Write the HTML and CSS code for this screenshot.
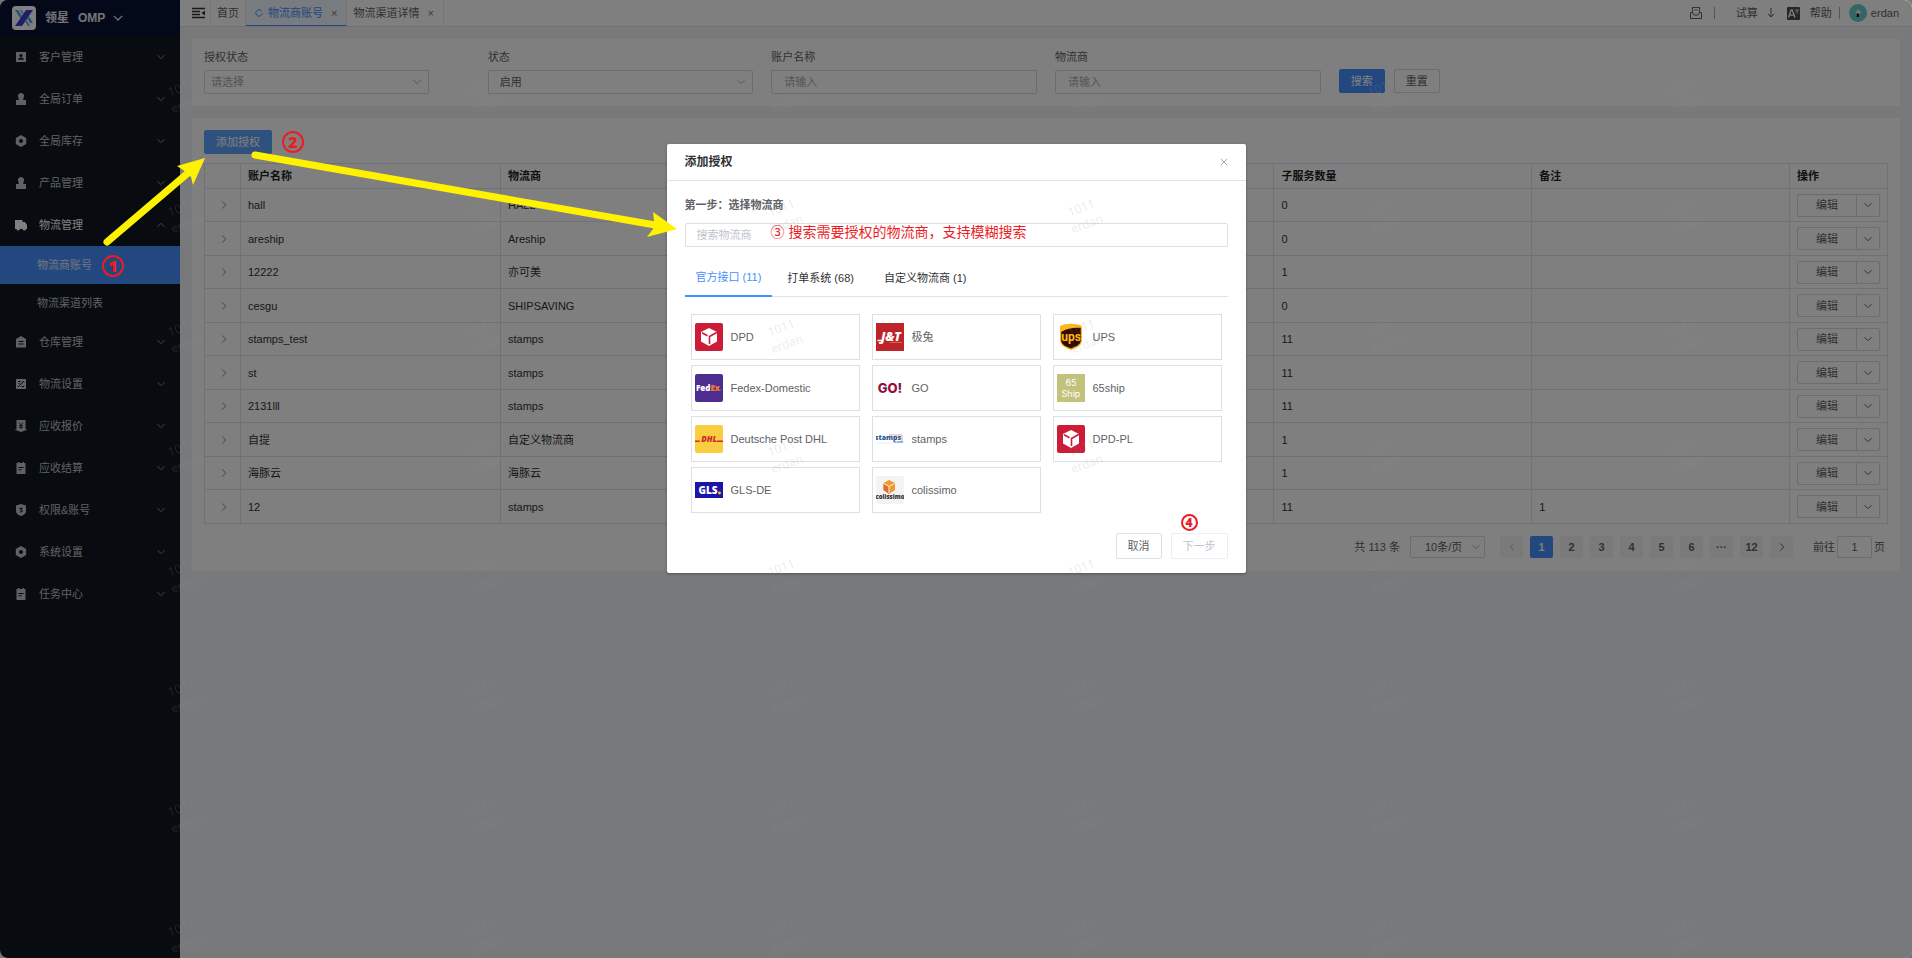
FILE: index.html
```
<!DOCTYPE html>
<html lang="zh-CN">

<head>
    <meta charset="UTF-8">
    <meta name="viewport" content="width=device-width, initial-scale=1.0">
    <title>领星 OMP - 物流商账号</title>
    <link rel="stylesheet" href="styles.css">
</head>

<body>
    <!-- Shared icons -->
    <svg class="sprite" aria-hidden="true">
        <symbol id="down" viewBox="0 0 10 10"><path d="M1.5 3.2 5 6.7 8.5 3.2" fill="none" stroke="currentColor"/></symbol>
        <symbol id="right" viewBox="0 0 10 10"><path d="M3.3 1.5 6.8 5 3.3 8.5" fill="none" stroke="currentColor"/></symbol>
        <symbol id="user" viewBox="0 0 12 12"><path d="M1 1h10v10H1z" fill="currentColor"/><circle cx="6" cy="4.5" r="1.6" fill="#0f171f"/><path d="M3.2 8.8c0-3 5.6-3 5.6 0z" fill="#0f171f"/></symbol>
        <symbol id="stamp" viewBox="0 0 12 12"><path d="M6 0a3 3 0 0 1 2.6 4.600L8.200 7H11v3H1V7h2.800L3.400 4.600A3 3 0 0 1 6 0zM1 10h10v2H1z" fill="currentColor"/></symbol>
        <symbol id="hex" viewBox="0 0 12 12"><path d="M6 0l5.200 3v6L6 12 .8 9V3zM6 4a2 2 0 1 0 0 4 2 2 0 0 0 0-4z" fill="currentColor" fill-rule="evenodd"/></symbol>
        <symbol id="truck" viewBox="0 0 12 12"><path d="M0 1h7.500v2H10l2 3v4h-1a1.600 1.600 0 0 1-3.200 0H4.700a1.600 1.600 0 0 1-3.200 0H0z" fill="currentColor"/></symbol>
        <symbol id="house" viewBox="0 0 12 12"><path d="M6 0l5 3v8.500H1V3zM3.500 5v1h5V5zm0 2.500v1h5v-1z" fill="currentColor" fill-rule="evenodd"/></symbol>
        <symbol id="percent" viewBox="0 0 12 12"><path d="M1 1h10v10H1z" fill="currentColor"/><path d="M3 9l6-6M3 3.500h2.500M6.500 8.500H9M3.500 5.500h1" stroke="#0f171f"/></symbol>
        <symbol id="price" viewBox="0 0 12 12"><path d="M1.500 0h9v9h1v1L6 12 .5 10V9h1z" fill="currentColor"/><path d="M4 2.500l2 2.500 2-2.500M6 5v4M4 5.500h4M4 7.300h4" stroke="#0f171f" fill="none" stroke-width=".8"/></symbol>
        <symbol id="note" viewBox="0 0 12 12"><path d="M1.500 1H3V0h1.500v1h3V0H9v1h1.500v11h-9z" fill="currentColor"/><path d="M3.500 5.500h5M3.500 7.800h3" stroke="#0f171f"/></symbol>
        <symbol id="shield" viewBox="0 0 12 12"><path d="M6 0l5 1.500V7c0 3-3 4.300-5 5-2-.7-5-2-5-5V1.500z" fill="currentColor"/><path d="M6 3.500v5M4.500 4.500h3M6 7h2" stroke="#0f171f"/></symbol>
        <symbol id="dpd" viewBox="0 0 28 28"><rect width="28" height="28" rx="2" fill="#cd1c37"/><path d="M14 5l8 4v9.500L14 23l-8-4.500V9z" fill="#fff"/><path d="M7 9.800l5.500 3M22 9.300l-7.500 4.200V21" fill="none" stroke="#cd1c37" stroke-width="1.600"/></symbol>
    </svg>

    <div class="app">
        <aside class="sidebar">
            <div class="brand">
                <svg class="brand-logo" viewBox="0 0 24 24">
                    <rect width="24" height="24" rx="4" fill="#fff"/>
                    <path d="M14 4h7L10 20H3z" fill="#3a3fd0"/>
                    <path d="M3 4h3l4 6-1.500 2.500zM8 4h1.500l2 3-1 1.500zM15 12l1.500-2.500L21 17h-3zM13 15l1-1.500 4 6.500h-2z" fill="#5b9fe0"/>
                </svg>
                <strong>领星</strong>
                <strong class="brand-code">OMP</strong>
                <svg class="brand-arrow"><use href="#down"/></svg>
            </div>
            <nav class="menu">
                <a class="menu-item" href="#"><svg class="menu-icon"><use href="#user"/></svg>客户管理<svg class="chevron"><use href="#down"/></svg></a>
                <a class="menu-item" href="#"><svg class="menu-icon"><use href="#stamp"/></svg>全局订单<svg class="chevron"><use href="#down"/></svg></a>
                <a class="menu-item" href="#"><svg class="menu-icon"><use href="#hex"/></svg>全局库存<svg class="chevron"><use href="#down"/></svg></a>
                <a class="menu-item" href="#"><svg class="menu-icon"><use href="#stamp"/></svg>产品管理<svg class="chevron"><use href="#down"/></svg></a>
                <a class="menu-item open" href="#"><svg class="menu-icon"><use href="#truck"/></svg>物流管理<svg class="chevron"><use href="#down"/></svg></a>
                <a class="sub-item active" href="#">物流商账号</a>
                <a class="sub-item" href="#">物流渠道列表</a>
                <a class="menu-item" href="#"><svg class="menu-icon"><use href="#house"/></svg>仓库管理<svg class="chevron"><use href="#down"/></svg></a>
                <a class="menu-item" href="#"><svg class="menu-icon"><use href="#percent"/></svg>物流设置<svg class="chevron"><use href="#down"/></svg></a>
                <a class="menu-item" href="#"><svg class="menu-icon"><use href="#price"/></svg>应收报价<svg class="chevron"><use href="#down"/></svg></a>
                <a class="menu-item" href="#"><svg class="menu-icon"><use href="#note"/></svg>应收结算<svg class="chevron"><use href="#down"/></svg></a>
                <a class="menu-item" href="#"><svg class="menu-icon"><use href="#shield"/></svg>权限&amp;账号<svg class="chevron"><use href="#down"/></svg></a>
                <a class="menu-item" href="#"><svg class="menu-icon"><use href="#hex"/></svg>系统设置<svg class="chevron"><use href="#down"/></svg></a>
                <a class="menu-item" href="#"><svg class="menu-icon"><use href="#note"/></svg>任务中心<svg class="chevron"><use href="#down"/></svg></a>
            </nav>
        </aside>

        <div class="main">
            <header class="topbar">
                <button class="fold" aria-label="收起菜单">
                    <svg viewBox="0 0 13 12"><path d="M0 1.500h13M0 4.500h8M0 7.500h8M0 10.500h13" stroke="#303133" stroke-width="1.400"/><path d="M13 3.500v5L9.500 6z" fill="#303133"/></svg>
                </button>
                <a class="page-tab" href="#">首页</a>
                <a class="page-tab current" href="#">
                    <svg class="reload" viewBox="0 0 8 8"><path d="M6.600 2A3.200 3.200 0 1 0 7.200 4.600" fill="none" stroke="currentColor"/></svg>
                    物流商账号<span class="tab-close">×</span>
                </a>
                <a class="page-tab" href="#">物流渠道详情<span class="tab-close">×</span></a>

                <div class="tools">
                    <svg class="inbox" viewBox="0 0 12 12"><path d="M2.500 6V.5h7V6M4.500 3h3M.5 5.500h2L4 8h4l1.500-2.500h2v6H.5z" fill="none" stroke="#606266"/></svg>
                    <span class="line"></span>
                    <a class="trial" href="#">试算</a>
                    <svg class="arrow-down" viewBox="0 0 8 10"><path d="M4 0v9M.8 5.800 4 9l3.200-3.200" fill="none" stroke="#606266"/></svg>
                    <svg class="lang" viewBox="0 0 13 13"><rect width="13" height="13" rx="1" fill="#4a4d55"/><path d="M1.500 10.500 4.200 3h1L8 10.500M2.500 8.200H7" fill="none" stroke="#fff" stroke-width="1.300"/><path d="M8 3h4M10 2v1M8.500 6.500l3-3.500M8.500 3l3 3.500" fill="none" stroke="#fff" stroke-width=".6"/></svg>
                    <a class="help" href="#">帮助</a>
                    <span class="line"></span>
                    <svg class="avatar" viewBox="0 0 18 18"><circle cx="9" cy="9" r="9" fill="#66cfc8"/><path d="M7 8l2-3 1.500 2L13 8.500 10 10v2H7z" fill="#e8eef0"/><path d="M7.500 9.500H10V13H7.500z" fill="#222"/></svg>
                    <span>erdan</span>
                </div>
            </header>

            <form class="panel filters">
                <div class="field">
                    <label for="authState">授权状态</label>
                    <div class="select-box short">
                        <select id="authState" class="placeholder"><option>请选择</option></select>
                        <svg class="chevron"><use href="#down"/></svg>
                    </div>
                </div>
                <div class="field">
                    <label for="state">状态</label>
                    <div class="select-box">
                        <select id="state"><option>启用</option></select>
                        <svg class="chevron"><use href="#down"/></svg>
                    </div>
                </div>
                <div class="field">
                    <label for="accountName">账户名称</label>
                    <input id="accountName" type="text" placeholder="请输入">
                </div>
                <div class="field">
                    <label for="provider">物流商</label>
                    <input id="provider" type="text" placeholder="请输入">
                </div>
                <div class="filter-btns">
                    <button type="button" class="btn primary">搜索</button>
                    <button type="button" class="btn">重置</button>
                </div>
            </form>

            <section class="panel list">
                <button class="btn primary light add">添加授权</button>
                <table class="accounts">
                    <colgroup>
                        <col class="col-expand">
                        <col class="col-account">
                        <col>
                        <col>
                        <col>
                        <col>
                        <col>
                        <col class="col-action">
                    </colgroup>
                    <thead>
                        <tr><th></th><th>账户名称</th><th>物流商</th><th></th><th></th><th>子服务数量</th><th>备注</th><th>操作</th></tr>
                    </thead>
                    <tbody>
                        <tr><td><svg class="expand"><use href="#right"/></svg></td><td>hall</td><td>HALL</td><td></td><td></td><td>0</td><td></td><td><div class="split"><button>编辑</button><button aria-label="更多"><svg><use href="#down"/></svg></button></div></td></tr>
                        <tr><td><svg class="expand"><use href="#right"/></svg></td><td>areship</td><td>Areship</td><td></td><td></td><td>0</td><td></td><td><div class="split"><button>编辑</button><button aria-label="更多"><svg><use href="#down"/></svg></button></div></td></tr>
                        <tr><td><svg class="expand"><use href="#right"/></svg></td><td>12222</td><td>亦可美</td><td></td><td></td><td>1</td><td></td><td><div class="split"><button>编辑</button><button aria-label="更多"><svg><use href="#down"/></svg></button></div></td></tr>
                        <tr><td><svg class="expand"><use href="#right"/></svg></td><td>cesgu</td><td>SHIPSAVING</td><td></td><td></td><td>0</td><td></td><td><div class="split"><button>编辑</button><button aria-label="更多"><svg><use href="#down"/></svg></button></div></td></tr>
                        <tr><td><svg class="expand"><use href="#right"/></svg></td><td>stamps_test</td><td>stamps</td><td></td><td></td><td>11</td><td></td><td><div class="split"><button>编辑</button><button aria-label="更多"><svg><use href="#down"/></svg></button></div></td></tr>
                        <tr><td><svg class="expand"><use href="#right"/></svg></td><td>st</td><td>stamps</td><td></td><td></td><td>11</td><td></td><td><div class="split"><button>编辑</button><button aria-label="更多"><svg><use href="#down"/></svg></button></div></td></tr>
                        <tr><td><svg class="expand"><use href="#right"/></svg></td><td>2131lll</td><td>stamps</td><td></td><td></td><td>11</td><td></td><td><div class="split"><button>编辑</button><button aria-label="更多"><svg><use href="#down"/></svg></button></div></td></tr>
                        <tr><td><svg class="expand"><use href="#right"/></svg></td><td>自提</td><td>自定义物流商</td><td></td><td></td><td>1</td><td></td><td><div class="split"><button>编辑</button><button aria-label="更多"><svg><use href="#down"/></svg></button></div></td></tr>
                        <tr><td><svg class="expand"><use href="#right"/></svg></td><td>海豚云</td><td>海豚云</td><td></td><td></td><td>1</td><td></td><td><div class="split"><button>编辑</button><button aria-label="更多"><svg><use href="#down"/></svg></button></div></td></tr>
                        <tr><td><svg class="expand"><use href="#right"/></svg></td><td>12</td><td>stamps</td><td></td><td></td><td>11</td><td>1</td><td><div class="split"><button>编辑</button><button aria-label="更多"><svg><use href="#down"/></svg></button></div></td></tr>
                    </tbody>
                </table>

                <div class="pagination">
                    <span>共 113 条</span>
                    <div class="select-box page-size">
                        <select aria-label="每页条数"><option>10条/页</option></select>
                        <svg class="chevron"><use href="#down"/></svg>
                    </div>
                    <div class="pager">
                        <button class="prev" aria-label="上一页"><svg><use href="#right"/></svg></button>
                        <button class="on">1</button>
                        <button>2</button>
                        <button>3</button>
                        <button>4</button>
                        <button>5</button>
                        <button>6</button>
                        <button>···</button>
                        <button>12</button>
                        <button aria-label="下一页"><svg><use href="#right"/></svg></button>
                    </div>
                    <div class="jump">
                        <label for="jumpPage">前往</label>
                        <input id="jumpPage" type="text" value="1">
                        <span>页</span>
                    </div>
                </div>
            </section>
        </div>

        <!-- Add authorization dialog -->
        <div class="mask">
            <div class="dialog" role="dialog" aria-labelledby="dialogTitle">
                <div class="dialog-head">
                    <strong id="dialogTitle">添加授权</strong>
                    <button class="close" aria-label="关闭"><svg viewBox="0 0 10 10"><path d="M1 1l8 8M9 1L1 9" stroke="#909399"/></svg></button>
                </div>
                <div class="dialog-body">
                    <label class="step" for="searchProvider">第一步：选择物流商</label>
                    <div class="search-box">
                        <input id="searchProvider" type="text" placeholder="搜索物流商">
                        <span class="tip">③ 搜索需要授权的物流商，支持模糊搜索</span>
                    </div>
                    <div class="tabs">
                        <button class="tab selected">官方接口 (11)</button>
                        <button class="tab">打单系统 (68)</button>
                        <button class="tab">自定义物流商 (1)</button>
                    </div>
                    <div class="providers">
                        <button class="card"><svg class="logo"><use href="#dpd"/></svg>DPD</button>
                        <button class="card">
                            <svg class="logo" viewBox="0 0 28 28"><rect width="28" height="28" fill="#bd2429"/><text x="15" y="18" class="logo-jt">J&amp;T</text><path d="M1.500 17.500h5" stroke="#fff" stroke-width="1.500"/><path d="M14 19.500h12" stroke="#e9a3a5" stroke-width=".5"/></svg>极兔
                        </button>
                        <button class="card">
                            <svg class="logo" viewBox="0 0 28 28"><path d="M3 3c6-3 16-3 22 0v14c0 6-6 8-11 10C9 25 3 23 3 17z" fill="#fdb71a"/><path d="M4.200 9c6-4 13-4.500 19.600-4V17c0 5-5 6.500-9.800 8.500C9.200 23.500 4.200 22 4.200 17z" fill="#330a05"/><text x="14" y="18" class="logo-ups">ups</text></svg>UPS
                        </button>
                        <button class="card">
                            <svg class="logo" viewBox="0 0 28 28"><rect width="28" height="28" rx="2" fill="#4d2d90"/><text x="1" y="17" class="logo-fedex">Fed<tspan fill="#f47b2a">Ex</tspan></text><circle cx="25.500" cy="16" r=".5" fill="#f47b2a"/></svg>Fedex-Domestic
                        </button>
                        <button class="card">
                            <svg class="logo" viewBox="0 0 28 28"><text x="14" y="19" class="logo-go">GO!</text></svg>GO
                        </button>
                        <button class="card">
                            <svg class="logo" viewBox="0 0 28 28"><rect width="28" height="28" fill="#c2c27d"/><text x="14" y="12" class="logo-65">65</text><text x="14" y="23" class="logo-65">Ship</text></svg>65ship
                        </button>
                        <button class="card">
                            <svg class="logo" viewBox="0 0 28 28"><rect width="28" height="28" rx="2" fill="#f8cd3f"/><text x="14" y="17" class="logo-dhl">DHL</text><path d="M0 15.500h5l-.6 1.500H0zM22 15.500h6V17h-6.600z" fill="#d22630"/></svg>Deutsche Post DHL
                        </button>
                        <button class="card">
                            <svg class="logo" viewBox="0 0 28 28"><path d="M13 10h13v7" fill="none" stroke="#f0a0a8"/><text x="12" y="15" class="logo-stamps">stamps</text><text x="22" y="18" class="logo-com">.com</text><path d="M1 18h16" stroke="#e4e8ef" stroke-width=".8"/></svg>stamps
                        </button>
                        <button class="card"><svg class="logo"><use href="#dpd"/></svg>DPD-PL</button>
                        <button class="card">
                            <svg class="logo" viewBox="0 0 28 28"><rect y="6" width="28" height="16" fill="#1e13a8"/><text x="13" y="18" class="logo-gls">GLS</text><circle cx="24.500" cy="17" r="1.400" fill="#ffd100"/></svg>GLS-DE
                        </button>
                        <button class="card">
                            <svg class="logo" viewBox="0 0 28 28"><rect width="28" height="28" rx="2" fill="#f3f3f3"/><path d="M13 4l6 3v7l-6 4-5.500-4V7z" fill="#ef9a2f"/><path d="M7.500 8l5.500 3v7l-5.500-4z" fill="#e5692c"/><path d="M8 7.500l5 3 5.500-3M13 10.500V17" fill="none" stroke="#f3f3f3"/><text x="14" y="23" class="logo-coli">colissimo</text></svg>colissimo
                        </button>
                    </div>
                </div>
                <div class="dialog-foot">
                    <button class="btn">取消</button>
                    <div class="next">
                        <span class="mark mark-small">4</span>
                        <button class="btn" disabled>下一步</button>
                    </div>
                </div>
            </div>
        </div>

        <!-- Watermark -->
        <svg class="watermark" aria-hidden="true">
            <defs>
                <pattern id="wm" width="300" height="120" patternUnits="userSpaceOnUse">
                    <g transform="rotate(-20 181 87)">
                        <text x="181" y="92">1011</text>
                        <text x="181" y="109">erdan</text>
                    </g>
                </pattern>
            </defs>
            <rect width="100%" height="100%" fill="url(#wm)"/>
        </svg>

        <!-- Guide marks and arrows -->
        <span class="mark mark-one">1</span>
        <span class="mark mark-two">2</span>
        <svg class="guide" aria-hidden="true">
            <path d="M107 242 188 173M255 155 655 225" stroke="#fff200" stroke-width="7" stroke-linecap="round"/>
            <path d="M205 158l-28 8 9 6 5 5 2 8zM677 229l-24-17 1 9-1 8-6 8z" fill="#fff200"/>
        </svg>
    </div>
</body>

</html>
```
FILE: styles.css
```
* {
    box-sizing: border-box;
}

html {
    background-color: #77757f;
}

body {
    margin: 0;
    font-family: "Liberation Sans", "Noto Sans CJK SC", sans-serif;
    font-size: 11px;
    line-height: 16px;
    color: #606266;
}

a {
    color: inherit;
    text-decoration: none;
}

button,
input,
select {
    margin: 0;
    padding: 0;
    font: inherit;
    color: inherit;
    background: none;
    border: none;
    appearance: none;
    outline: none;
}

.sprite {
    display: none;
}

svg {
    flex-shrink: 0;
}

.app {
    position: relative;
    display: flex;
    min-height: 100vh;
    overflow: hidden;
    border-radius: 8px;
    background-color: #eff2f7;
}

/* Sidebar */
.sidebar {
    flex: 0 0 180px;
    background-color: #10171f;
    color: #bfc2c6;
}

.brand {
    display: flex;
    align-items: center;
    height: 36px;
    padding-left: 12px;
    background-color: #081335;
    color: #e6e8ee;
    font-size: 12px;
}

.brand-logo {
    width: 24px;
    height: 24px;
    margin-right: 9px;
}

.brand-code {
    margin-left: 9px;
}

.brand-arrow {
    width: 12px;
    height: 12px;
    margin-left: 7px;
}

.menu-item {
    display: flex;
    align-items: center;
    height: 42px;
    padding: 0 14px 0 15px;
}

.menu-icon {
    width: 12px;
    height: 12px;
    margin-right: 12px;
}

.chevron {
    width: 10px;
    height: 10px;
    color: #a8abb2;
}

.menu-item .chevron {
    margin-left: auto;
    color: #85898f;
}

.menu-item.open {
    color: #fff;
}

.menu-item.open .chevron {
    transform: rotate(180deg);
}

.sub-item {
    display: flex;
    align-items: center;
    height: 37px;
    padding-left: 37px;
}

.sub-item.active {
    height: 38px;
    background-color: #468ffe;
    color: #e4ecf8;
}

/* Top bar */
.main {
    flex: 1;
    min-width: 0;
}

.topbar {
    display: flex;
    align-items: stretch;
    height: 27px;
    background-color: #fff;
    border-bottom: 1px solid #e1e4ea;
}

.fold {
    display: flex;
    align-items: center;
    width: 31px;
    padding-left: 12px;
    border-right: 1px solid #ebedf0;
}

.fold svg {
    width: 13px;
    height: 12px;
}

.page-tab {
    display: flex;
    align-items: center;
    padding: 0 6px;
    border-right: 1px solid #ebedf0;
}

.page-tab.current {
    padding-left: 9px;
    color: #468ffe;
    background-color: #f0f6ff;
    border-bottom: 1px solid #468ffe;
}

.reload {
    width: 8px;
    height: 8px;
    margin-right: 5px;
}

.tab-close {
    margin: 0 3px 0 8px;
    color: #707378;
}

.tools {
    display: flex;
    align-items: center;
    margin-left: auto;
    padding-right: 13px;
}

.inbox {
    width: 12px;
    height: 12px;
    margin-right: 12px;
}

.line {
    width: 1px;
    height: 12px;
    background-color: #a8abb2;
}

.trial {
    margin-left: 21px;
}

.arrow-down {
    width: 8px;
    height: 10px;
    margin: 0 12px 0 9px;
}

.lang {
    width: 13px;
    height: 13px;
    margin-right: 10px;
}

.help {
    margin-right: 7px;
}

.avatar {
    width: 18px;
    height: 18px;
    margin: 0 4px 0 9px;
}

/* Panels */
.panel {
    margin: 12px 12px 0;
    padding: 12px;
    background-color: #fff;
}

.filters {
    display: grid;
    grid-template-columns: repeat(6, 1fr);
    gap: 18px;
    height: 67px;
    padding-top: 10px;
}

.field label {
    display: block;
    margin-bottom: 5px;
}

.field input,
.select-box {
    width: 100%;
    height: 24px;
    border: 1px solid #d5d8de;
    border-radius: 2px;
}

.field input {
    padding: 0 12px;
}

input::placeholder,
.placeholder {
    color: #a8abb2;
    opacity: 1;
}

.select-box {
    display: flex;
    align-items: center;
    padding-right: 6px;
}

.select-box.short {
    width: 225px;
}

.select-box select {
    flex: 1;
    height: 100%;
    padding-left: 11px;
}

.select-box.short select {
    padding-left: 6px;
}

.filter-btns {
    display: flex;
    gap: 9px;
    padding-top: 20px;
}

.btn {
    height: 24px;
    padding: 0 11px;
    border: 1px solid #d5d8de;
    border-radius: 2px;
    background-color: #fff;
}

.btn.primary {
    border-color: #468ffe;
    background-color: #468ffe;
    color: #fff;
}

.btn.light {
    border-color: #5fa3fb;
    background-color: #5fa3fb;
}

/* Account list */
.add {
    display: block;
    margin-bottom: 9px;
}

.accounts {
    width: 100%;
    table-layout: fixed;
    border-collapse: collapse;
    color: #303133;
}

.col-expand {
    width: 36px;
}

.col-account {
    width: 260px;
}

.col-action {
    width: 98px;
}

.accounts th,
.accounts td {
    height: 33px;
    padding: 0 7px;
    border: 1px solid #dde3ec;
    text-align: left;
}

.accounts th {
    height: 25px;
    color: #222;
}

.accounts tr:nth-child(even) td {
    height: 34px;
}

.expand {
    display: block;
    width: 10px;
    height: 10px;
    margin-left: 7px;
    color: #85898f;
}

.split {
    display: flex;
    height: 23px;
    border: 1px solid #d5d8de;
    border-radius: 2px;
    color: #606266;
}

.split button:first-child {
    flex: 1;
}

.split button:last-child {
    width: 23px;
    border-left: 1px solid #d5d8de;
}

.split svg,
.pager svg {
    display: block;
    width: 10px;
    height: 10px;
    margin: 0 auto;
}

.pagination {
    display: flex;
    align-items: center;
    justify-content: flex-end;
    margin-top: 12px;
    padding-right: 3px;
    height: 22px;
}

.page-size {
    width: 75px;
    height: 22px;
    margin: 0 15px 0 10px;
    padding-right: 3px;
}

.page-size select {
    padding-left: 14px;
}

.pager {
    display: flex;
    gap: 7px;
}

.pager button {
    width: 23px;
    height: 22px;
    background-color: #f4f4f5;
    border-radius: 2px;
    font-weight: bold;
}

.pager .on {
    background-color: #468ffe;
    color: #fff;
}

.pager .prev {
    color: #b4b7bd;
}

.pager .prev svg {
    transform: rotate(180deg);
}

.jump {
    display: flex;
    align-items: center;
    gap: 2px;
    margin-left: 20px;
}

.jump input {
    width: 35px;
    height: 22px;
    border: 1px solid #d5d8de;
    border-radius: 2px;
    text-align: center;
}

.list {
    padding-bottom: 13px;
}

/* Dialog */
.mask {
    position: absolute;
    inset: 0;
    padding-top: 144px;
    background-color: rgba(0, 0, 0, 0.5);
}

.dialog {
    width: 579px;
    margin: 0 auto;
    background-color: #fff;
    border-radius: 2px;
    box-shadow: 0 1px 3px rgba(0, 0, 0, 0.3);
}

.dialog-head {
    display: flex;
    align-items: center;
    justify-content: space-between;
    height: 37px;
    padding: 0 18px;
    border-bottom: 1px solid #dfe4ed;
    color: #303133;
    font-size: 12px;
}

.close svg {
    display: block;
    width: 8px;
    height: 8px;
}

.dialog-body {
    padding: 16px 18px 0;
}

.step {
    display: block;
    margin-bottom: 10px;
    font-weight: bold;
}

.search-box {
    position: relative;
}

.search-box input {
    width: 100%;
    height: 24px;
    padding: 0 11px;
    border: 1px solid #dcdfe6;
    border-radius: 2px;
}

.search-box input::placeholder {
    color: #c0c4cc;
}

.tip {
    position: absolute;
    top: 0;
    left: 86px;
    color: #ed1c24;
    font-size: 14px;
    line-height: 18px;
    white-space: nowrap;
}

.tabs {
    display: flex;
    height: 50px;
    padding-top: 11px;
    border-bottom: 1px solid #dfe4ed;
}

.tab {
    height: 39px;
    padding: 0 15px;
    color: #303133;
}

.tab.selected {
    padding: 0 11px;
    color: #468ffe;
    border-bottom: 2px solid #468ffe;
}

.providers {
    display: grid;
    grid-template-columns: repeat(3, 1fr);
    gap: 5px 12px;
    padding: 17px 6px 0;
}

.card {
    display: flex;
    align-items: center;
    gap: 8px;
    height: 46px;
    padding: 0 4px 0 3px;
    border: 1px solid #dcdfe6;
}

.logo {
    width: 28px;
    height: 28px;
}

.logo text {
    text-anchor: middle;
    font-family: "Open Sans", sans-serif;
    font-weight: 800;
}

.logo .logo-jt {
    font-size: 12px;
    font-style: italic;
    fill: #fff;
}

.logo .logo-ups {
    font-family: Roboto, sans-serif;
    font-size: 12px;
    font-weight: bold;
    fill: #fdb71a;
}

.logo .logo-fedex {
    text-anchor: start;
    font-size: 8px;
    fill: #fff;
}

.logo .logo-go {
    font-family: Inter, sans-serif;
    font-size: 13px;
    fill: #8f1238;
}

.logo .logo-65 {
    font-family: Inter, sans-serif;
    font-size: 9px;
    font-weight: normal;
    fill: #fff;
}

.logo .logo-dhl {
    font-size: 8px;
    font-style: italic;
    fill: #d22630;
}

.logo .logo-stamps {
    font-size: 7px;
    fill: #2a5a94;
}

.logo .logo-com {
    font-size: 4px;
    fill: #6e94bd;
}

.logo .logo-gls {
    font-size: 10px;
    fill: #fff;
}

.logo .logo-coli {
    font-size: 6px;
    fill: #333;
}

.dialog-foot {
    display: flex;
    justify-content: flex-end;
    gap: 9px;
    padding: 20px 18px 14px;
}

.dialog-foot .btn {
    height: 26px;
    border-color: #dcdfe6;
}

.dialog-foot .btn:disabled {
    color: #c0c4cc;
    border-color: #ebeef5;
}

.next {
    position: relative;
}

/* Watermark and guide */
.watermark,
.guide {
    position: absolute;
    top: 0;
    left: 0;
    width: 100%;
    height: 100%;
    pointer-events: none;
}

.watermark text {
    text-anchor: middle;
    font-family: "Noto Sans", sans-serif;
    font-size: 12px;
    fill: rgba(145, 145, 145, 0.17);
}

.mark {
    position: absolute;
    display: flex;
    align-items: center;
    justify-content: center;
    width: 22px;
    height: 22px;
    border: 2px solid #ed1c24;
    border-radius: 50%;
    color: #ed1c24;
    font-family: "Open Sans", sans-serif;
    font-size: 16px;
    font-weight: 800;
}

.mark-one {
    top: 255px;
    left: 102px;
}

.mark-two {
    top: 131px;
    left: 282px;
}

.mark-small {
    top: -19px;
    left: 10px;
    width: 17px;
    height: 17px;
    font-size: 12px;
}
```
